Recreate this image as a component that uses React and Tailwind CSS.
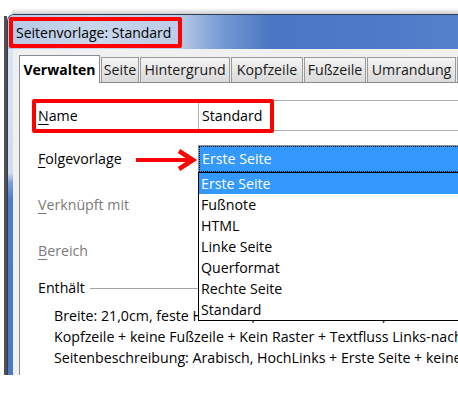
import React from "react";

const font = { fontFamily: '"Open Sans", "Noto Sans", sans-serif' };

const tabs = [
  { label: "Seite", w: "w-[38px]" },
  { label: "Hintergrund", w: "w-[90px]" },
  { label: "Kopfzeile", w: "w-[72px]" },
  { label: "Fußzeile", w: "w-[62px]" },
  { label: "Umrandung", w: "w-[89px]" },
  { label: "", w: "w-[40px]" },
];

const items = [
  "Erste Seite",
  "Fußnote",
  "HTML",
  "Linke Seite",
  "Querformat",
  "Rechte Seite",
  "Standard",
];

const Label = ({ first, rest, disabled }) => (
  <div
    className={
      "w-[160px] shrink-0 " + (disabled ? "text-[#7a7a7a]" : "text-black")
    }
  >
    <span className="underline underline-offset-[3px]">{first}</span>
    {rest}
  </div>
);

const App = () => {
  return (
    <div
      className="w-[458px] h-[403px] bg-white overflow-hidden relative text-[14.2px] text-black"
      style={font}
    >
      <div className="h-[8px]" />
      <div className="h-[6px] ml-[12px] bg-[linear-gradient(to_bottom,#ffffff,#cfcfcf)]" />
      <div className="flex h-[361px]">
        <div className="w-[4px] shrink-0" />
        <div className="w-[3px] shrink-0 mt-[2px] bg-[#505050]" />
        <div className="w-[470px] shrink-0 flex flex-col rounded-tl-[7px] overflow-hidden border-t border-l border-[#2f3d57]">
          {/* title bar */}
          <div className="h-[34px] shrink-0 flex items-center pl-[8px] text-[14px] bg-[linear-gradient(to_right,#b7c9e5_0%,#c8d6eb_18%,#bccde7_36%,#7398d3_46%,#4a77c3_56%,#4d7bc7_80%,#5482cd_100%)]">
            Seitenvorlage: Standard
          </div>
          <div className="flex flex-1">
            <div className="w-[5px] shrink-0 bg-[linear-gradient(to_bottom,#dae4f2_0%,#cfdcef_38%,#7b9fd8_41%,#4f7ecb_46%,#4a79c8_100%)]" />
            <div className="flex-1 bg-[#f0f0f0] pl-[6px] pt-[6px] flex flex-col">
              {/* tabs */}
              <div className="flex items-end h-[27px]">
                <div className="w-[81px] h-[28px] shrink-0 -mb-px relative z-10 bg-white border border-b-0 border-[#898c95] flex items-center justify-center font-bold text-[14px]">
                  Verwalten
                </div>
                {tabs.map((t, i) => (
                  <div
                    key={i}
                    className={
                      t.w +
                      " h-[25px] ml-[1px] shrink-0 border border-b-0 border-[#9a9a9a] bg-[linear-gradient(to_bottom,#f4f4f4,#e6e6e6_50%,#dadada)] flex items-center justify-center text-[#1a1a1a]"
                    }
                  >
                    {t.label}
                  </div>
                ))}
              </div>
              {/* panel */}
              <div className="flex-1 bg-white border-t border-l border-[#898c95] pt-[17px] pl-[18px] flex flex-col">
                <div className="flex items-center h-[31px]">
                  <Label first="N" rest="ame" />
                  <div className="flex-1 h-[31px] border border-r-0 border-[#abadb3] flex items-center pl-[3px]">
                    Standard
                  </div>
                </div>

                <div className="flex items-center h-[27px] mt-[14px]">
                  <Label first="F" rest="olgevorlage" />
                  <div className="flex-1 h-[27px] relative border-t border-l border-[#8e8f8f]">
                    <div className="h-full bg-[#3399ff] border border-dotted border-black border-r-0 text-white flex items-center pl-[2px]">
                      Erste Seite
                    </div>
                    <div className="absolute left-[-1px] top-[26px] w-[300px] z-20 bg-white border border-black">
                      {items.map((it, i) => (
                        <div
                          key={it}
                          className={
                            "h-[21px] leading-[21px] pl-[2px] " +
                            (i === 0 ? "bg-[#3399ff] text-white" : "text-black")
                          }
                        >
                          {it}
                        </div>
                      ))}
                    </div>
                  </div>
                </div>

                <div className="flex items-center h-[30px] mt-[18px]">
                  <Label first="V" rest="erknüpft mit" disabled />
                </div>

                <div className="flex items-center h-[30px] mt-[16px]">
                  <Label first="B" rest="ereich" disabled />
                </div>

                <div className="flex items-center h-[20px] mt-[12px]">
                  <span>Enthält</span>
                  <div className="flex-1 h-px bg-[#a0a0a0] ml-[5px]" />
                </div>

                <div className="mt-[7px] pl-[16px] leading-[21px] whitespace-nowrap">
                  <div>Breite: 21,0cm, feste Höhe: 29,7cm + Rand links: 2,0cm</div>
                  <div>Kopfzeile + keine Fußzeile + Kein Raster + Textfluss Links-nach-rechts</div>
                  <div>Seitenbeschreibung: Arabisch, HochLinks + Erste Seite + keine Kopfzeile</div>
                </div>
              </div>
            </div>
          </div>
        </div>
      </div>

      {/* red annotations */}
      <div className="absolute left-[9px] top-[17px] w-[173px] h-[31px] border-4 border-[#ff0000] rounded-[2px]" />
      <div className="absolute left-[32px] top-[99px] w-[242px] h-[34px] border-4 border-[#ff0000] rounded-[2px]" />
      <svg
        className="absolute left-[134px] top-[148px]"
        width="64"
        height="24"
        viewBox="0 0 64 24"
      >
        <line x1="2" y1="12" x2="57" y2="12" stroke="#ff0000" strokeWidth="4" />
        <polyline
          points="45,3 59,12 45,21"
          fill="none"
          stroke="#ff0000"
          strokeWidth="4.5"
        />
      </svg>
    </div>
  );
};

export default App;
